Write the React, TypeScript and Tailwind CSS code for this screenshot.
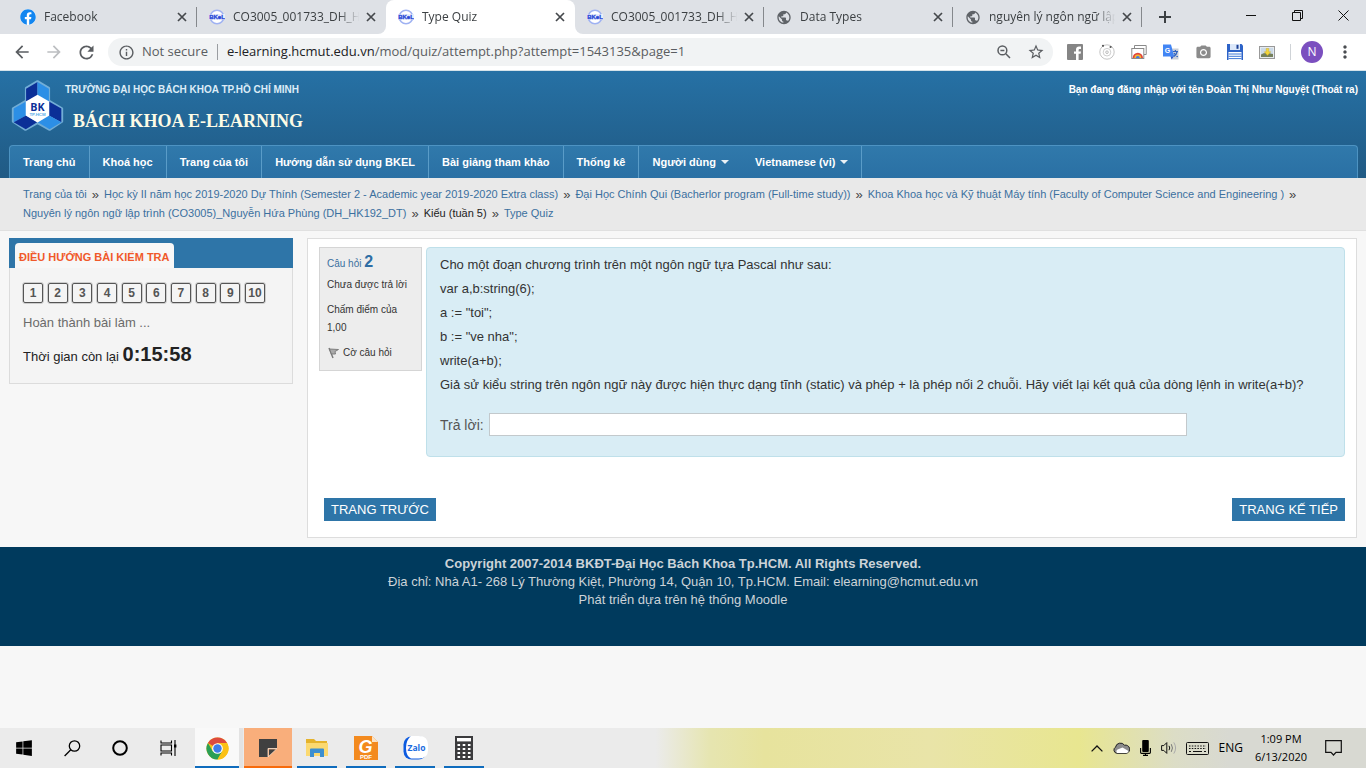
import type { ReactNode } from "react";
import {
  MdArrowBack,
  MdArrowForward,
  MdCameraAlt,
  MdInfoOutline,
  MdMoreVert,
  MdPublic,
  MdRefresh,
  MdStarBorder,
} from "react-icons/md";
import { FaFacebook, FaWindows } from "react-icons/fa";

const ARIAL = "font-['Liberation_Sans',Arial,sans-serif]";
const SEGOE = "font-['Open_Sans','Noto_Sans',sans-serif]";

/* ---------- favicons and logos ---------- */

function BkelIcon() {
  return (
    <svg width="16" height="16" viewBox="0 0 16 16">
      <circle cx="8" cy="8" r="6.8" fill="#fff" stroke="#9fb2f2" strokeWidth="1.6" />
      <rect x="0" y="5" width="16" height="6" fill="#e9edfc" />
      <text x="8" y="10.2" textAnchor="middle" fontSize="6" fontWeight="700" fill="#2546d6" stroke="#2546d6" strokeWidth="0.3" fontFamily="Liberation Sans, sans-serif">BKeL</text>
    </svg>
  );
}

function FacebookIcon() {
  return (
    <span className="flex size-4 items-center justify-center rounded-full bg-white">
      <FaFacebook size={16} color="#1386f0" />
    </span>
  );
}

function BkLogo() {
  return (
    <svg width="53" height="53" viewBox="33 233 158 158" className="shrink-0">
      <path d="M112 240 146 260V298L185 321V360L148 384 112 364 76 384 39 360V321L78 298V260Z" fill="#a9d6f5" stroke="#8cc4ea" strokeWidth="7" strokeLinejoin="round" opacity="0.75" />
      <path d="M112 242V288L78 306V262Z" fill="#0b2f97" />
      <path d="M112 242V288L146 306V262Z" fill="#2c8fe6" />
      <path d="M41 321 78 300V342L41 362Z" fill="#2c8fe6" />
      <path d="M41 362 78 342 111 362 77 383Z" fill="#0b2f97" />
      <path d="M183 321 146 300V342L183 362Z" fill="#0b2f97" />
      <path d="M183 362 146 342 113 362 148 383Z" fill="#2c8fe6" />
      <path d="M112 280 147 300V342L112 363 77 342V300Z" fill="#fff" />
      <text x="112" y="329" textAnchor="middle" fontSize="32" fontWeight="700" fill="#0b2f97" fontFamily="Open Sans, sans-serif">BK</text>
      <text x="112" y="342" textAnchor="middle" fontSize="13" fontWeight="700" fill="#5aaee8" fontFamily="Liberation Sans, sans-serif">TP.HCM</text>
    </svg>
  );
}

/* ---------- browser chrome ---------- */

type TabData = { title: string; icon: ReactNode; active?: boolean; divider?: boolean };

const tabs: TabData[] = [
  { title: "Facebook", icon: <FacebookIcon />, divider: true },
  { title: "CO3005_001733_DH_HK", icon: <BkelIcon /> },
  { title: "Type Quiz", icon: <BkelIcon />, active: true },
  { title: "CO3005_001733_DH_HK", icon: <BkelIcon />, divider: true },
  { title: "Data Types", icon: <MdPublic size={17} color="#5f6368" />, divider: true },
  { title: "nguyên lý ngôn ngữ lập", icon: <MdPublic size={17} color="#5f6368" />, divider: true },
];

function Cross() {
  return (
    <svg width="10" height="10" viewBox="0 0 10 10" stroke="#45484c" strokeWidth="1.7">
      <path d="M1 1 9 9M9 1 1 9" />
    </svg>
  );
}

function Tab({ title, icon, active, divider }: TabData) {
  return (
    <div className={`relative flex h-[34px] w-[189px] items-center pl-3 pr-[10px] ${active ? "rounded-t-lg bg-white" : ""}`}>
      {active && (
        <>
          <span className="absolute bottom-0 -left-2 size-2 bg-white">
            <span className="block size-2 rounded-br-lg bg-[#dee1e6]" />
          </span>
          <span className="absolute bottom-0 -right-2 size-2 bg-white">
            <span className="block size-2 rounded-bl-lg bg-[#dee1e6]" />
          </span>
        </>
      )}
      <span className="flex w-4 shrink-0 justify-center">{icon}</span>
      <span className="ml-2 w-[129px] shrink-0 overflow-hidden whitespace-nowrap text-xs text-[#3c4043] [mask-image:linear-gradient(to_right,#000_82%,transparent_98%)]">{title}</span>
      <button aria-label={`Close ${title}`} className="ml-[4px] shrink-0">
        <Cross />
      </button>
      {divider && <span className="absolute right-0 h-5 w-px bg-[#85888c]" />}
    </div>
  );
}

function TabStrip() {
  return (
    <div className="flex h-[34px] items-center bg-[#dee1e6] pl-2">
      {tabs.map((t, i) => (
        <Tab key={i} {...t} />
      ))}
      <button aria-label="New tab" className="ml-[17px]">
        <svg width="12" height="12" viewBox="0 0 12 12" stroke="#3c4043" strokeWidth="2">
          <path d="M6 0V12M0 6H12" />
        </svg>
      </button>
      <div className="mb-1 ml-auto flex">
        <button aria-label="Minimize" className="flex w-[46px] items-center justify-center">
          <svg width="10" height="10" viewBox="0 0 10 10" stroke="#111">
            <path d="M0 5.5H10" />
          </svg>
        </button>
        <button aria-label="Restore" className="flex w-[46px] items-center justify-center">
          <svg width="11" height="11" viewBox="0 0 11 11" stroke="#111" fill="none">
            <path d="M0.5 2.5H8.5V10.5H0.5ZM2.5 2.5V0.5H10.5V8.5H8.5" />
          </svg>
        </button>
        <button aria-label="Close window" className="flex w-[46px] items-center justify-center">
          <svg width="11" height="11" viewBox="0 0 11 11" stroke="#111">
            <path d="M0.5 0.5 10.5 10.5M10.5 0.5 0.5 10.5" />
          </svg>
        </button>
      </div>
    </div>
  );
}

const extensions: { name: string; icon: ReactNode }[] = [
  {
    name: "Facebook",
    icon: (
      <svg width="16" height="16" viewBox="0 0 16 16">
        <rect width="16" height="16" rx="1" fill="#858585" />
        <path d="M9 16V9.8H7V7.4H9V5.6C9 3.6 10.2 2.5 12 2.5H14V4.9H12.8C12 4.9 11.6 5.3 11.6 6V7.4H14L13.6 9.8H11.6V16Z" fill="#fff" />
      </svg>
    ),
  },
  {
    name: "Orbit",
    icon: (
      <svg width="16" height="16" viewBox="0 0 16 16" fill="none" stroke="#c4c4c4">
        <circle cx="8" cy="8" r="7.2" />
        <circle cx="8" cy="8.2" r="3.8" stroke="#cfcfcf" />
        <circle cx="8" cy="8.2" r="1.3" stroke="#bbb" />
        <circle cx="4" cy="1.8" r="1.1" fill="#555" stroke="none" />
        <circle cx="11.6" cy="3" r="1.1" fill="#555" stroke="none" />
      </svg>
    ),
  },
  {
    name: "Gallery",
    icon: (
      <svg width="16" height="16" viewBox="0 0 16 16" fill="none">
        <path d="M3.5 4.5V1.5H15.2V10.5H13" stroke="#8a8a8a" />
        <rect x="0.8" y="4.5" width="12" height="10" fill="#fff" stroke="#8a8a8a" />
        <path d="M1.6 14A5.2 5.2 0 0 1 12 14Z" fill="#e2453a" />
        <path d="M3.4 14A3.4 3.4 0 0 1 10.2 14Z" fill="#f2b632" />
        <path d="M4.9 14A1.9 1.9 0 0 1 8.7 14Z" fill="#3b78e7" />
      </svg>
    ),
  },
  {
    name: "Translate",
    icon: (
      <svg width="16" height="16" viewBox="0 0 16 16">
        <path d="M5.5 4.5H15.5V15.5H8.6Z" fill="#c9cfd8" />
        <path d="M8.6 15.5 11 12.2H7.4Z" fill="#2a56c6" />
        <path d="M0 0.5H8L11.2 12.4H0Z" fill="#4285f4" />
        <text x="4.6" y="9" textAnchor="middle" fontSize="7" fontWeight="700" fill="#fff" fontFamily="Liberation Sans, sans-serif">G</text>
        <path d="M10 7.5H15M12.4 6V7.5M14.2 7.5Q13.3 11 10.8 12.6M11 9Q12.5 11.6 14.8 12.8" stroke="#2f62c0" strokeWidth="1.2" fill="none" />
      </svg>
    ),
  },
  { name: "Screenshot", icon: <MdCameraAlt size={17} color="#8b8b8b" /> },
  {
    name: "Save page",
    icon: (
      <svg width="16" height="16" viewBox="0 0 16 16">
        <path d="M0 0H14.5L16 1.5V16H0Z" fill="#2d63c8" />
        <rect x="3" y="0" width="10" height="6" fill="#dce8fa" />
        <rect x="9.5" y="0.8" width="2" height="4" fill="#1b3f94" />
        <rect x="1.5" y="8" width="13" height="8" fill="#fff" />
        <path d="M1.5 10H14.5M1.5 12.3H14.5M1.5 14.6H14.5" stroke="#3f79d6" />
      </svg>
    ),
  },
  {
    name: "Download images",
    icon: (
      <svg width="16" height="13" viewBox="0 0 16 13">
        <rect x="0.5" y="0.5" width="15" height="12" fill="#e6ebef" stroke="#999" />
        <path d="M2 2H14V8H2Z" fill="#cbdae8" />
        <path d="M2 8.5Q6 6 14 8V11H2Z" fill="#75805c" />
        <path d="M7.2 2.5H9.8V5.8H11.8L8.5 9.4 5.2 5.8H7.2Z" fill="#f3d63a" stroke="#c9a51e" strokeWidth="0.4" />
      </svg>
    ),
  },
];

function Toolbar() {
  return (
    <div className="flex h-[37px] items-center border-b border-[#d5e3ea] bg-white text-[#5a5d61]">
      <button aria-label="Back" className="ml-1.5 flex w-8 shrink-0 justify-center">
        <MdArrowBack size={20} />
      </button>
      <button aria-label="Forward" className="flex w-8 shrink-0 justify-center text-[#bcbec1]">
        <MdArrowForward size={20} />
      </button>
      <button aria-label="Reload" className="flex w-8 shrink-0 justify-center">
        <MdRefresh size={21} />
      </button>
      <div className="ml-1.5 flex h-7 flex-1 items-center rounded-full bg-[#f1f3f4] pr-px pl-[10px] text-[13px]">
        <MdInfoOutline size={17} />
        <span className="ml-[7px] w-[67px] whitespace-nowrap">Not secure</span>
        <span className="ml-2 h-4 w-px bg-[#9a9da1]" />
        <span className="ml-[9px] flex-1 whitespace-nowrap">
          <span className="text-[#202124]">e-learning.hcmut.edu.vn</span>/mod/quiz/attempt.php?attempt=1543135&amp;page=1
        </span>
        <button aria-label="Zoom" className="flex w-8 justify-center">
          <svg width="14" height="14" viewBox="0 0 14 14" fill="none" stroke="currentColor" strokeWidth="1.5">
            <circle cx="5.4" cy="5.4" r="4.4" />
            <path d="M8.8 8.8 13 13M3.4 5.4H7.4" />
          </svg>
        </button>
        <button aria-label="Bookmark" className="flex w-8 justify-center">
          <MdStarBorder size={18} />
        </button>
      </div>
      <div className="ml-[6px] flex">
        {extensions.map((e) => (
          <button key={e.name} aria-label={e.name} className="flex h-[18px] w-8 items-center justify-center">
            {e.icon}
          </button>
        ))}
      </div>
      <span className="ml-[7px] h-4 w-px bg-[#cfd3d7]" />
      <button aria-label="Profile" className="ml-[10px] flex size-[22px] items-center justify-center rounded-full bg-[#7b4fbf] text-xs text-white">
        N
      </button>
      <button aria-label="Menu" className="mr-[11px] ml-3 text-[#4a4d51]">
        <MdMoreVert size={20} />
      </button>
    </div>
  );
}

/* ---------- site ---------- */

const menu: { label: string; caret?: boolean; line?: boolean }[] = [
  { label: "Trang chủ", line: true },
  { label: "Khoá học", line: true },
  { label: "Trang của tôi", line: true },
  { label: "Hướng dẫn sử dụng BKEL", line: true },
  { label: "Bài giảng tham khảo", line: true },
  { label: "Thống kê", line: true },
  { label: "Người dùng", caret: true },
  { label: "Vietnamese (vi)", caret: true, line: true },
];

function SiteHeader() {
  return (
    <header className="bg-linear-to-b from-[#2671a5] to-[#205a84]">
      <div className="flex h-[74px] items-start justify-between pr-2 pl-[11px]">
        <div className="flex pt-2">
          <BkLogo />
          <div className="pl-px">
            <p className="pt-1 text-[10px] leading-[14px] font-bold text-[#dcecf7]">TRƯỜNG ĐẠI HỌC BÁCH KHOA TP.HỒ CHÍ MINH</p>
            <h1 className="mt-3 pl-2 font-['Liberation_Serif',serif] text-lg leading-6 font-bold text-[#fdfbe6]">BÁCH KHOA E-LEARNING</h1>
          </div>
        </div>
        <p className="pt-3 text-[10px] leading-[14px] font-bold whitespace-nowrap text-white">
          Bạn đang đăng nhập với tên <a href="#profile">Đoàn Thị Như Nguyệt</a> (<a href="#logout">Thoát ra</a>)
        </p>
      </div>
      <nav className="mx-2 ml-[9px] flex h-[33px] overflow-hidden rounded-t border border-b-0 border-[#4d93c2] bg-linear-to-b from-[#3079ab] to-[#2a70a4]">
        {menu.map((m) => (
          <a key={m.label} href="#menu" className={`flex items-center px-[13px] text-[11px] font-bold whitespace-nowrap text-white ${m.line ? "border-r border-[#5a9cc8]" : ""}`}>
            {m.label}
            {m.caret && <span className="ml-[5px] border-x-4 border-t-4 border-x-transparent border-t-white/90" />}
          </a>
        ))}
      </nav>
    </header>
  );
}

const crumbs = [
  "Trang của tôi",
  "Học kỳ II năm học 2019-2020 Dự Thính (Semester 2 - Academic year 2019-2020 Extra class)",
  "Đại Học Chính Qui (Bacherlor program (Full-time study))",
  "Khoa Khoa học và Kỹ thuật Máy tính (Faculty of Computer Science and Engineering )",
  "Nguyên lý ngôn ngữ lập trình (CO3005)_Nguyễn Hứa Phùng (DH_HK192_DT)",
  "Kiểu (tuần 5)",
  "Type Quiz",
];

function Breadcrumb() {
  return (
    <ol className="flex flex-wrap border-b border-[#e0e0e0] bg-[#e9e9e9] px-[23px] pt-[7px] pb-[7px] text-[11px] leading-[19px] text-[#3b709f]">
      {crumbs.map((c, i) => (
        <li key={c} className="flex">
          {c.startsWith("Kiểu") ? <span className="text-[#222]">{c}</span> : <a href="#crumb">{c}</a>}
          {i < crumbs.length - 1 && <span className="mx-[5px] text-[13px] text-[#444]">»</span>}
        </li>
      ))}
    </ol>
  );
}

function QuizNavigation() {
  return (
    <aside className="w-[284px] shrink-0 border border-[#dcdcdc] bg-[#f4f4f4]">
      <div className="-mx-px -mt-px flex h-[30px] items-end bg-[#2e75a8] pl-1.5">
        <h2 className="h-[25px] rounded-t bg-[#f7f7f7] px-1 pt-px text-[11px] leading-[27px] font-bold whitespace-nowrap text-[#f0592a]">ĐIỀU HƯỚNG BÀI KIỂM TRA</h2>
      </div>
      <div className="px-[13px] pt-[15px] pb-3">
        <div className="flex w-[242px] justify-between">
          {Array.from({ length: 10 }, (_, i) => (
            <a key={i} href="#question" className="flex h-5 w-5 items-center justify-center rounded-xs border border-[#555] bg-[#f4f4f4] pb-px text-xs font-bold text-[#555] outline outline-[#555]/25">
              {i + 1}
            </a>
          ))}
        </div>
        <a href="#finish" className="mt-[11px] block text-[13px] leading-[18px] text-[#6b6b6b]">Hoàn thành bài làm ...</a>
        <p className="mt-2 text-[13px] leading-7 text-[#222]">
          Thời gian còn lại <span className="text-xl font-bold text-[#222]">0:15:58</span>
        </p>
      </div>
    </aside>
  );
}

function FlagIcon() {
  return (
    <svg width="12" height="12" viewBox="0 0 12 12">
      <path d="M1 1 5 11" stroke="#777" strokeWidth="1.4" />
      <path d="M1.5 2 10.5 2.5 7 4.5 7.5 7 3.4 7Z" fill="#aaa" stroke="#777" strokeWidth="0.9" />
    </svg>
  );
}

const questionLines = [
  "Cho một đoạn chương trình trên một ngôn ngữ tựa Pascal như sau:",
  "var a,b:string(6);",
  'a := "toi";',
  'b := "ve nha";',
  "write(a+b);",
  "Giả sử kiểu string trên ngôn ngữ này được hiện thực dạng tĩnh (static) và phép + là phép nối 2 chuỗi. Hãy viết lại kết quả của dòng lệnh in write(a+b)?",
];

function Question() {
  return (
    <main className="min-w-0 flex-1 border border-[#ddd] bg-white px-[11px] pt-2 pb-4">
      <div className="flex items-start gap-1">
        <section className="w-[103px] shrink-0 border border-[#d5d5d5] bg-[#ededed] px-[7px] pt-[2px] pb-2 text-[10px] leading-[18px] text-[#333]">
          <h3 className="h-6 leading-6 text-[#3b709f]">
            Câu hỏi <span className="text-base font-bold text-[#2e6da4]">2</span>
          </h3>
          <p className="mt-[2px]">Chưa được trả lời</p>
          <p className="mt-[7px]">Chấm điểm của 1,00</p>
          <button className="mt-[7px] ml-px flex items-center gap-[3px]">
            <FlagIcon />
            Cờ câu hỏi
          </button>
        </section>
        <section className="min-w-0 flex-1 rounded border border-[#bfe0ea] bg-[#d9edf5] px-[13px] pt-[5px] pb-5 text-[13px] text-[#333]">
          {questionLines.map((l) => (
            <p key={l} className="leading-[24px]">{l}</p>
          ))}
          <div className="mt-4 flex items-center">
            <label htmlFor="answer" className="text-sm text-[#555]">Trả lời:</label>
            <input id="answer" type="text" className="ml-[5px] h-[23px] w-[698px] border border-[#c3c9cc] bg-white px-2 text-sm" />
          </div>
        </section>
      </div>
      <div className="mt-[41px] flex justify-between pl-[5px]">
        <button className="h-[23px] bg-[#2e75a8] px-[7px] text-[13px] whitespace-nowrap text-white">TRANG TRƯỚC</button>
        <button className="h-[23px] bg-[#2e75a8] px-[7px] text-[13px] whitespace-nowrap text-white">TRANG KẾ TIẾP</button>
      </div>
    </main>
  );
}

/* ---------- taskbar ---------- */

const apps: { name: string; cell: string; bar: string; icon: ReactNode }[] = [
  {
    name: "Chrome",
    cell: "bg-[#f9f9f9] border-r-4 border-[#e3e3e3]",
    bar: "w-full bg-[#0f6cbd]",
    icon: (
      <svg width="23" height="23" viewBox="0 0 24 24">
        <circle cx="12" cy="12" r="11.5" fill="#fbc116" />
        <path d="M12 12 2.04 6.25A11.5 11.5 0 0 1 21.96 6.25H12Z" fill="#dd4b3e" />
        <path d="M2.04 6.25A11.5 11.5 0 0 0 12 23.5L17 14.9 12 12 7 14.9Z" fill="#2b9f56" />
        <path d="M12 6.25H21.96A11.5 11.5 0 0 1 12 23.5L17 14.9Z" fill="#fbc116" />
        <circle cx="12" cy="12" r="5.6" fill="#fff" />
        <circle cx="12" cy="12" r="4.4" fill="#3f7de8" />
      </svg>
    ),
  },
  {
    name: "Sticky Notes",
    cell: "bg-[#f9ae7b]",
    bar: "w-full bg-[#f76b0c]",
    icon: (
      <svg width="18" height="18" viewBox="0 0 18 18">
        <path d="M0 0H18V18H0Z" fill="#404040" />
        <path d="M9 9.5H17.5L9 18Z" fill="#f9ae7b" />
        <path d="M10.2 10.8H15.4L10.2 16Z" fill="#404040" />
        <path d="M18 9.5V18H9Z" fill="#f9ae7b" />
        <path d="M9 9.5H18L9 18Z" fill="none" stroke="#fde3cf" strokeWidth="0.8" />
        <path d="M10 10.4H16.4L10 16.6Z" fill="#404040" />
      </svg>
    ),
  },
  {
    name: "File Explorer",
    cell: "",
    bar: "w-10 bg-[#0f6cbd]",
    icon: (
      <svg width="22" height="18" viewBox="0 0 22 18">
        <path d="M0 0H8L10 2H21V17H0Z" fill="#e5b32d" />
        <path d="M0 4H22V17H0Z" fill="#fbd971" />
        <path d="M4 18V10.5Q4 9.5 5 9.5H17Q18 9.5 18 10.5V18H14V14H8V18Z" fill="#3d8fd0" />
      </svg>
    ),
  },
  {
    name: "Foxit PDF",
    cell: "",
    bar: "w-10 bg-[#0f6cbd]",
    icon: (
      <svg width="24" height="24" viewBox="0 0 24 24">
        <path d="M0 0H18L24 6V24H0Z" fill="#f38a1e" />
        <path d="M18 0 24 6H18Z" fill="#fbe3c6" />
        <text x="11.5" y="16.5" textAnchor="middle" fontSize="18" fontWeight="700" fontStyle="italic" fill="#fff" fontFamily="Liberation Sans, sans-serif">G</text>
        <text x="12" y="23" textAnchor="middle" fontSize="6" fontWeight="700" fill="#fff" fontFamily="Liberation Sans, sans-serif">PDF</text>
      </svg>
    ),
  },
  {
    name: "Zalo",
    cell: "",
    bar: "w-10 bg-[#0f6cbd]",
    icon: (
      <svg width="25" height="24" viewBox="0 0 25 24">
        <rect x="0.5" y="0.5" width="23" height="23" rx="8" fill="#0d5be0" />
        <path d="M8 0H16Q25 0 25 9V14Q25 22.5 16 22.5H8Q3 20 3 12 3 4 8 0Z" fill="#fff" />
        <text x="13.5" y="14.5" textAnchor="middle" fontSize="8.5" fontWeight="700" fill="#1a6be0" fontFamily="Open Sans, sans-serif">Zalo</text>
      </svg>
    ),
  },
  {
    name: "Calculator",
    cell: "",
    bar: "w-10 bg-[#0f6cbd]",
    icon: (
      <svg width="18" height="24" viewBox="0 0 18 24">
        <rect width="18" height="24" fill="#3b3b3d" />
        <rect x="2" y="2" width="14" height="3.4" fill="#fff" />
        {[8, 12, 16, 20].map((y) =>
          [2.5, 7.7, 12.9].map((x) => <rect key={`${x}-${y}`} x={x} y={y} width="2.6" height="2" fill="#fff" />)
        )}
      </svg>
    ),
  },
];

function Taskbar() {
  return (
    <footer className={`mt-auto flex h-10 items-stretch bg-[linear-gradient(to_right,#ebebeb_48%,#e6e5b0_52%,#e7e39d_56%,#e9e4a8_68%,#e8e690_79%,#dcddc6_86%,#d8d9d2_90%)] text-black ${SEGOE}`}>
      <button aria-label="Start" className="flex w-12 items-center justify-center">
        <FaWindows size={18} />
      </button>
      <button aria-label="Search" className="flex w-12 items-center justify-center">
        <svg width="17" height="17" viewBox="0 0 17 17" fill="none" stroke="#000" strokeWidth="1.3">
          <circle cx="10.5" cy="6" r="5.2" />
          <path d="M6.8 9.7 0.6 16" />
        </svg>
      </button>
      <button aria-label="Cortana" className="flex w-12 items-center justify-center">
        <svg width="16" height="16" viewBox="0 0 16 16" fill="none" stroke="#000" strokeWidth="2">
          <circle cx="8" cy="8" r="6.8" />
        </svg>
      </button>
      <button aria-label="Task view" className="mr-[3px] flex w-12 items-center justify-center">
        <svg width="17" height="16" viewBox="0 0 17 16" fill="none" stroke="#000" strokeWidth="1.1">
          <path d="M1 0.5V3H11.5V0.5M1 15.5V13H11.5V15.5M1 5H11.5V11H1ZM15 0V16" />
          <rect x="14" y="4.5" width="2.4" height="3" fill="#000" stroke="none" />
        </svg>
      </button>
      <div className="flex gap-px">
        {apps.map((a) => (
          <button key={a.name} aria-label={a.name} className={`relative flex w-12 items-center justify-center ${a.cell}`}>
            {a.icon}
            <span className={`absolute bottom-0 h-0.5 ${a.bar}`} />
          </button>
        ))}
      </div>
      <div className="ml-auto flex items-center pr-6">
        <svg width="12" height="7" viewBox="0 0 12 7" fill="none" stroke="#111" strokeWidth="1.3">
          <path d="M0.6 6.4 6 1 11.4 6.4" />
        </svg>
        <svg width="17" height="12" viewBox="0 0 17 12" className="ml-[10px]">
          <path d="M4 11.3A3.3 3.3 0 0 1 2.5 5.2 5 5 0 0 1 11.5 3.2 4 4 0 0 1 13.5 11.3Z" fill="#8b8b8b" stroke="#222" />
          <path d="M4 11A2.3 2.3 0 0 1 5.2 7.2L9.5 5.6 15.5 9Q15 11 13.5 11Z" fill="#fff" />
        </svg>
        <svg width="11" height="16" viewBox="0 0 11 16" className="ml-[10px]">
          <rect x="2.2" y="0" width="6.6" height="12" rx="1" />
          <path d="M0.6 8V12.5Q0.6 13.4 1.5 13.4H9.5Q10.4 13.4 10.4 12.5V8M5.5 13.4V15.4M3 15.4H8" fill="none" stroke="#000" strokeWidth="1.1" />
        </svg>
        <svg width="17" height="14" viewBox="0 0 17 14" fill="none" stroke="#111" className="ml-[10px]">
          <path d="M0.6 4.6H2.8L5.8 1.6V12.4L2.8 9.4H0.6Z" />
          <path d="M8 4.8Q9.5 7 8 9.2" />
          <path d="M10.3 3.2Q12.6 7 10.3 10.8" stroke="#777" />
          <path d="M12.8 1.4Q16.4 7 12.8 12.6" stroke="#aaa" />
        </svg>
        <svg width="23" height="13" viewBox="0 0 23 13" fill="none" stroke="#111" className="ml-2">
          <rect x="0.5" y="0.5" width="22" height="12" rx="1" />
          <path d="M3 4H20M3 6.5H20" strokeDasharray="1.5 1.3" strokeWidth="1.2" />
          <path d="M3 9.5H5M7 9.5H16M18 9.5H20" strokeWidth="1.2" />
        </svg>
        <span className="ml-[10px] text-xs">ENG</span>
        <div className="ml-[11px] w-[54px] text-center text-[11px] leading-[18px] whitespace-nowrap">
          <p>1:09 PM</p>
          <p>6/13/2020</p>
        </div>
        <svg width="17" height="16" viewBox="0 0 17 16" fill="none" stroke="#111" strokeWidth="1.2" className="ml-[17px]">
          <path d="M0.7 0.7H16.3V12.3H11L8.5 15 6 12.3H0.7Z" />
        </svg>
      </div>
    </footer>
  );
}

export default function App() {
  return (
    <div className={`flex min-h-screen flex-col bg-[#f7f7f7] ${ARIAL}`}>
      <div className={SEGOE}>
        <TabStrip />
        <Toolbar />
      </div>
      <SiteHeader />
      <Breadcrumb />
      <div className="flex items-start gap-[14px] px-[9px] pt-[7px] pb-[9px]">
        <QuizNavigation />
        <Question />
      </div>
      <div className="h-[99px] bg-[#003a5d] pt-2 text-center text-[13px] leading-[18px] text-[#ccd3d8]">
        <p className="font-bold">Copyright 2007-2014 BKĐT-Đại Học Bách Khoa Tp.HCM. All Rights Reserved.</p>
        <p>Địa chỉ: Nhà A1- 268 Lý Thường Kiệt, Phường 14, Quận 10, Tp.HCM. Email: elearning@hcmut.edu.vn</p>
        <p>Phát triển dựa trên hệ thống Moodle</p>
      </div>
      <Taskbar />
    </div>
  );
}
